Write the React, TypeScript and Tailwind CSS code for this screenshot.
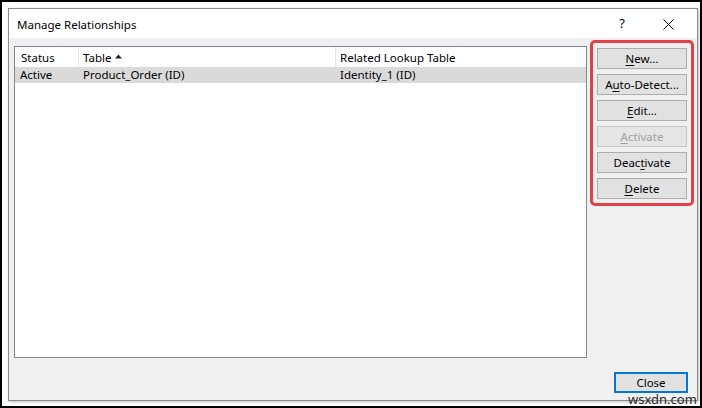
const font = { fontFamily: '"Noto Sans", "Open Sans", sans-serif' }

const buttons = [
  { pre: "", key: "N", post: "ew...", disabled: false },
  { pre: "A", key: "u", post: "to-Detect...", disabled: false },
  { pre: "", key: "E", post: "dit...", disabled: false },
  { pre: "", key: "A", post: "ctivate", disabled: true },
  { pre: "Deac", key: "t", post: "ivate", disabled: false },
  { pre: "", key: "D", post: "elete", disabled: false },
]

function DlgButton({ pre, k, post, disabled }: { pre: string; k: string; post: string; disabled: boolean }) {
  return (
    <div
      className={`h-[21px] w-[90px] border flex items-center justify-center text-[11.5px] leading-none ${
        disabled ? "text-[#a0a0a0] border-[#c4c4c4] bg-[#e6e6e6]" : "text-black border-[#adadad] bg-[#e1e1e1]"
      }`}
    >
      <span>
        {pre}
        <span className="underline underline-offset-2">{k}</span>
        {post}
      </span>
    </div>
  )
}

export default function App() {
  return (
    <div className="w-[702px] h-[408px] bg-black p-[2px]" style={font}>
      <div className="h-full bg-white pl-[6px] pt-[6px] pr-[2px] pb-[4px] relative">
        <div className="w-[690px] h-[393px] border border-[#8c8c8c] flex flex-col shadow-[1px_1px_3px_rgba(0,0,0,0.25)]">
          {/* title bar */}
          <div className="h-[29px] bg-white flex items-center pl-[8px] text-[11.5px] text-black">
            <span className="flex-1 mt-[2px]">Manage Relationships</span>
            <span className="w-[20px] text-center text-[13px] mr-[31px] mt-[1px]">?</span>
            <svg width="11" height="11" viewBox="0 0 11 11" className="mr-[23px] mt-[1px]">
              <path d="M0.5 0.5 L10.5 10.5 M10.5 0.5 L0.5 10.5" stroke="#000" strokeWidth="1" />
            </svg>
          </div>

          {/* body */}
          <div className="flex-1 bg-[#f0f0f0] flex flex-col pl-[5px] pt-[2px] pr-[3px]">
            <div className="flex items-start">
              <div className="mt-[6px] w-[573px] h-[312px] border border-[#828790] bg-white text-[11.5px] text-black">
                <div className="h-[20px] flex items-center">
                  <div className="w-[64px] h-full pl-[6px] pt-[1px] flex items-center border-r border-[#e5e5e5]">Status</div>
                  <div className="w-[257px] h-full pl-[4px] pt-[1px] flex items-center border-r border-[#e5e5e5]">
                    Table
                    <svg width="7" height="5" viewBox="0 0 7 5" className="ml-[4px] mb-[2px]">
                      <path d="M0 4.5 L3.5 0.5 L7 4.5 Z" fill="#222" />
                    </svg>
                  </div>
                  <div className="pl-[4px] pt-[1px]">Related Lookup Table</div>
                </div>
                <div className="h-[16px] flex items-center bg-[#dadada]">
                  <div className="w-[64px] pl-[5px]">Active</div>
                  <div className="w-[257px] pl-[4px]">Product_Order (ID)</div>
                  <div className="pl-[4px]">Identity_1 (ID)</div>
                </div>
              </div>

              <div className="ml-[3px] w-[104px] border-[3px] border-[#e04146] rounded-[5px] pl-[4px] pt-[5px] pb-[4px] flex flex-col gap-[5px]">
                {buttons.map((b, i) => (
                  <DlgButton key={i} pre={b.pre} k={b.key} post={b.post} disabled={b.disabled} />
                ))}
              </div>
            </div>

            <div className="mt-auto mb-[7px] pr-[6px] flex justify-end">
              <div className="h-[21px] w-[74px] border-2 border-[#0078d7] bg-[#e1e1e1] flex items-center justify-center text-[11.5px] text-black">
                Close
              </div>
            </div>
          </div>
        </div>

        <span className="absolute left-[626px] top-[391px] text-[13px] leading-none text-[#2a2a2a]">
          wsxdn.com
        </span>
      </div>
    </div>
  )
}
